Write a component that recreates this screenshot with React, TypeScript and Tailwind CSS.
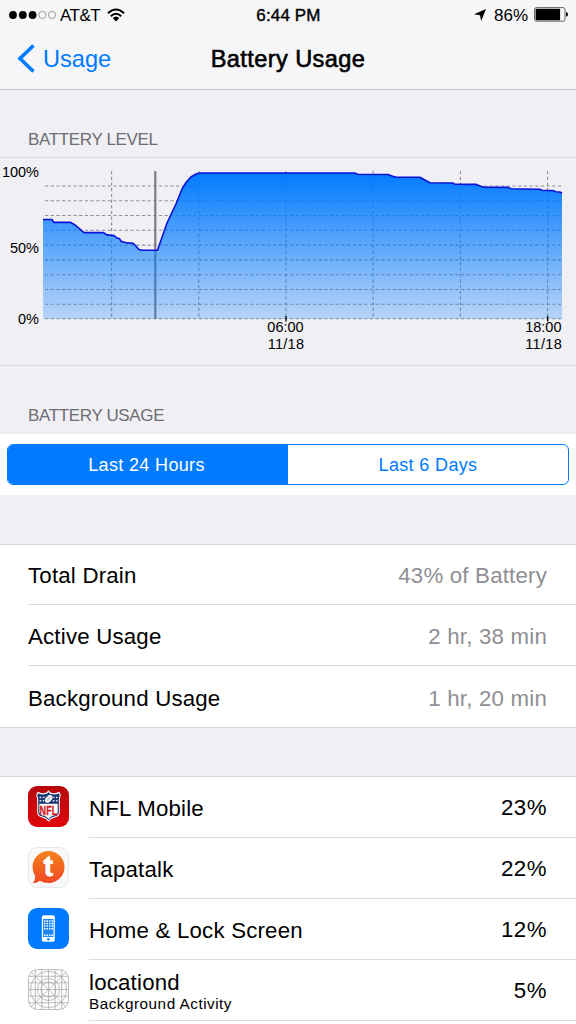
import * as React from 'react';

interface IUsageApp {
  name: string;
  percent: string;
  detail?: string;
  icon: React.ReactNode;
}

const LEVEL_LINE =
  '43,219.5 52,219.5 54,222.4 70.5,222.4 75,225 84,232.6 103.5,232.6 107,234.9 114,235.6 117,238 119.5,238.7 121,241.2 127,242.9 133,243.3 135,245 139,249.5 142,250.2 157.5,250.2 167,223 176,204 182,189 186,182.5 191,177 196,174 200,173 355,173 357.5,174.3 388,174.5 392,176 396,177.2 420,177.2 424,179.5 430,182.7 453,183 455,184.3 476,184.4 480,186 484,187.2 508,187.4 511,188.8 540,189.2 542,190.3 553,190.6 556,191.8 560,192 562,193';

const GRID_ROWS = [186, 200.7, 215.5, 230.3, 245.1, 259.9, 274.7, 289.5, 304.3, 318.8];
const GRID_COLUMNS = [111.6, 198.8, 286, 373.2, 460.4, 547.6];

const NflIcon = () => (
  <svg width="41" height="41" viewBox="0 0 41 41">
    <defs>
      <linearGradient id="nfl" x1="0" y1="0" x2="0" y2="1">
        <stop offset="0" stopColor="#b5080c" />
        <stop offset="1" stopColor="#e0070b" />
      </linearGradient>
    </defs>
    <rect width="41" height="41" rx="9" fill="url(#nfl)" />
    <path
      d="M20.5 4.3L22.5 6.6Q27 8 31.5 5.8L32.8 9.5Q31.5 12 31.8 15V26Q31.8 30.5 27 31.6Q22.5 32.6 20.5 35.8Q18.5 32.6 14 31.6Q9.2 30.5 9.2 26V15Q9.5 12 8.2 9.5L9.5 5.8Q14 8 18.5 6.6Z"
      fill="#fff"
    />
    <path
      d="M20.5 5.9L22 7.8Q27 9.2 31 7.2L31.7 9.5Q30.5 12 30.8 15V26Q30.8 29.8 26.5 30.6Q22.5 31.5 20.5 34.2Q18.5 31.5 14.5 30.6Q10.2 29.8 10.2 26V15Q10.5 12 9.3 9.5L10 7.2Q14 9.2 19 7.8Z"
      fill="#17366f"
    />
    <path d="M11.3 17.8H29.7V26Q29.7 28.8 26 29.6Q22 30.5 20.5 32.9Q19 30.5 15 29.6Q11.3 28.8 11.3 26Z" fill="#fff" />
    <path d="M11.5 11.5H29.5M11.5 14.8H29.5" stroke="#d5deeb" strokeWidth="1.6" strokeDasharray="1.9 1.4" />
    <ellipse cx="20.7" cy="12.9" rx="5.4" ry="3.9" transform="rotate(-48 20.7 12.9)" fill="#17366f" />
    <ellipse cx="20.7" cy="12.9" rx="4.6" ry="2.9" transform="rotate(-48 20.7 12.9)" fill="#f3f5f8" />
    <path d="M19.3 14.5L22.3 11" stroke="#8794a8" strokeWidth="0.8" />
    <text x="20.5" y="28.8" textAnchor="middle" textLength="18" lengthAdjust="spacingAndGlyphs" fontSize="13.5" fontWeight="700" fill="#d9141b" stroke="#d9141b" strokeWidth="0.3">
      NFL
    </text>
  </svg>
);

const TapatalkIcon = () => (
  <svg width="41" height="41" viewBox="0 0 41 41">
    <defs>
      <linearGradient id="tapatalk" x1="0" y1="0" x2="0" y2="1">
        <stop offset="0" stopColor="#f5821f" />
        <stop offset="1" stopColor="#ee4823" />
      </linearGradient>
    </defs>
    <rect x="0.5" y="0.5" width="40" height="40" rx="9" fill="#f9f9f9" stroke="#e8e8e8" />
    <path
      d="M20.5 4A16 16 0 1 1 20.5 36Q15.5 36 11.8 33.7Q9.3 35.8 4.8 36.2Q7.4 33.5 7.2 29Q4.5 25 4.5 20A16 16 0 0 1 20.5 4Z"
      fill="url(#tapatalk)"
    />
    <text x="20.5" y="29.3" textAnchor="middle" fontSize="28" fontWeight="700" fill="#fff" stroke="#fff" strokeWidth="0.8">
      t
    </text>
    <polygon points="21.5,8.3 21.5,14.5 14.5,14.5" fill="#fff" />
  </svg>
);

const HomeScreenIcon = () => (
  <svg width="41" height="41" viewBox="0 0 41 41">
    <rect width="41" height="41" rx="9" fill="#007aff" />
    <rect x="13.8" y="7.3" width="13" height="26.4" rx="2" fill="#fff" />
    <rect x="15.1" y="11" width="10.4" height="18" fill="#1b86fb" />
    <g stroke="#fff" strokeWidth="1.5" strokeDasharray="1.5 1">
      <path d="M16 12.9H25M16 15.5H25M16 18.1H25M16 20.7H25M16 27.2H25" />
    </g>
    <circle cx="20.3" cy="31.3" r="1.2" fill="#007aff" />
  </svg>
);

const PlaceholderIcon = () => (
  <svg width="41" height="41" viewBox="0 0 41 41" fill="none" stroke="#a3a3a3" strokeWidth="0.7">
    <rect x="0.5" y="0.5" width="40" height="40" rx="9" fill="#fdfdfd" />
    <path d="M7.3 1V40M13.8 1V40M20.5 1V40M27.2 1V40M33.7 1V40" />
    <path d="M1 7.3H40M1 13.8H40M1 20.5H40M1 27.2H40M1 33.7H40" />
    <path d="M3 3L38 38M38 3L3 38" />
    <circle cx="20.5" cy="20.5" r="18" />
    <circle cx="20.5" cy="20.5" r="11" />
    <circle cx="20.5" cy="20.5" r="7.5" />
  </svg>
);

const apps: IUsageApp[] = [
  { name: 'NFL Mobile', percent: '23%', icon: <NflIcon /> },
  { name: 'Tapatalk', percent: '22%', icon: <TapatalkIcon /> },
  { name: 'Home & Lock Screen', percent: '12%', icon: <HomeScreenIcon /> },
  { name: 'locationd', percent: '5%', detail: 'Background Activity', icon: <PlaceholderIcon /> },
];

const totals = [
  { label: 'Total Drain', value: '43% of Battery' },
  { label: 'Active Usage', value: '2 hr, 38 min' },
  { label: 'Background Usage', value: '1 hr, 20 min' },
];

const StatusBar = () => (
  <div className="flex h-[29px] items-center justify-between pr-[8px] pl-[9px] text-[17px] leading-none">
    <div className="flex w-1/3 items-center">
      <svg width="48" height="10" viewBox="0 0 48 10">
        {[4, 13.8, 23.6].map((x) => (
          <circle key={x} cx={x} cy="5" r="3.9" />
        ))}
        {[33.4, 43.1].map((x) => (
          <circle key={x} cx={x} cy="5" r="3.6" fill="none" stroke="#777" strokeWidth="0.7" />
        ))}
      </svg>
      <span className="ml-[3px] pt-px tracking-[-0.5px]">AT&amp;T</span>
      <svg className="ml-[7px]" width="18" height="14" viewBox="0 0 18 14">
        <g fill="none" stroke="#000" strokeWidth="2">
          <path d="M1 5.2Q9 -2.2 17 5.2" />
          <path d="M3.8 8.2Q9 3.4 14.2 8.2" />
        </g>
        <path d="M5.7 10Q9 7 12.3 10L9 13.4Z" />
      </svg>
    </div>
    <span className="pt-px tracking-[0.15px] [-webkit-text-stroke:0.4px_#000]">6:44 PM</span>
    <div className="flex w-1/3 items-center justify-end">
      <svg width="12" height="12" viewBox="0 0 12 12">
        <path d="M12 0L7.2 12L6 6.3L0 5.2Z" />
      </svg>
      <span className="ml-[8px] pt-px">86%</span>
      <svg className="ml-[6px]" width="34" height="15" viewBox="0 0 34 15">
        <rect x="0.5" y="0.6" width="30.5" height="13.6" rx="2" fill="none" stroke="#555" strokeWidth="0.9" />
        <rect x="1.6" y="1.7" width="24.5" height="11.5" rx="0.8" />
        <path d="M32 5Q34 5.5 34 7.4Q34 9.3 32 9.8Z" />
      </svg>
    </div>
  </div>
);

const BatteryChart = () => (
  <svg className="block" width="576" height="207" viewBox="0 158 576 207">
    <defs>
      <linearGradient id="level" x1="0" y1="173" x2="0" y2="319" gradientUnits="userSpaceOnUse">
        <stop offset="0" stopColor="#007aff" stopOpacity="0.99" />
        <stop offset="1" stopColor="#007aff" stopOpacity="0.23" />
      </linearGradient>
    </defs>
    <g stroke="#8e8e94" strokeWidth="1.1" strokeDasharray="3.2 2.5">
      {GRID_ROWS.map((y) => (
        <path key={y} d={`M45 ${y}H561`} />
      ))}
      {GRID_COLUMNS.map((x) => (
        <path key={x} d={`M${x} 171V319`} />
      ))}
    </g>
    <path d="M155.3 171V319" stroke="#7f7f83" strokeWidth="2.2" />
    <polygon points={`43,319 ${LEVEL_LINE} 562,319`} fill="url(#level)" />
    <polyline points={LEVEL_LINE} fill="none" stroke="#0a12d6" strokeWidth="1.6" />
    <path d="M286 316V321.5M547.6 316V321.5" stroke="#111" strokeWidth="1.4" />
    <g fontSize="14.5" fill="#000">
      <text x="39" y="176.8" textAnchor="end">100%</text>
      <text x="39" y="253" textAnchor="end">50%</text>
      <text x="39" y="324" textAnchor="end">0%</text>
      <text x="285.5" y="332.2" textAnchor="middle">06:00</text>
      <text x="286" y="349" textAnchor="middle" letterSpacing="0.3">11/18</text>
      <text x="561.5" y="332.2" textAnchor="end">18:00</text>
      <text x="562" y="349" textAnchor="end" letterSpacing="0.3">11/18</text>
    </g>
  </svg>
);

const App: React.FC = () => {
  const [range, setRange] = React.useState<'day' | 'week'>('day');

  return (
    <div className="h-[1024px] w-[576px] overflow-hidden bg-[#efeff4] font-['Liberation_Sans',Arial,sans-serif] text-black">
      <header className="h-[90px] border-b border-[#c4c4c8] bg-[#f6f6f8]">
        <StatusBar />
        <div className="flex h-[60px] items-center justify-between px-[17px]">
          <button className="flex w-1/4 items-center text-[23.6px] text-[#007aff]">
            <svg width="18" height="29" viewBox="0 0 18 29">
              <path d="M16.5 1.5L3 14.5L16.5 27.5" fill="none" stroke="#007aff" strokeWidth="3.6" />
            </svg>
            <span className="ml-[8px] pt-[2px]">Usage</span>
          </button>
          <h1 className="pt-[2px] text-[23.6px] tracking-[0.4px] whitespace-nowrap [-webkit-text-stroke:0.6px_#000]">
            Battery Usage
          </h1>
          <div className="w-1/4" />
        </div>
      </header>

      <h2 className="flex h-[67px] items-end pb-[5px] pl-[28px] text-[17px] tracking-[-0.35px] text-[#6d6d72]">
        BATTERY LEVEL
      </h2>
      <section className="h-[209px] border-y border-[#d9d9de]">
        <BatteryChart />
      </section>

      <h2 className="flex h-[68px] items-end pb-[6px] pl-[28px] text-[17px] tracking-[-0.35px] text-[#6d6d72]">
        BATTERY USAGE
      </h2>
      <div className="h-[61px] bg-white px-[7px] py-[10px]">
        <div className="flex h-[41px] overflow-hidden rounded-[6px] border-[1.5px] border-[#007aff] text-[18px] tracking-[0.35px]">
          <button
            onClick={() => setRange('day')}
            className={range === 'day' ? 'w-1/2 bg-[#007aff] pt-px pr-[3px] text-white' : 'w-1/2 pt-px pr-[3px] text-[#007aff]'}
          >
            Last 24 Hours
          </button>
          <button
            onClick={() => setRange('week')}
            className={range === 'week' ? 'w-1/2 bg-[#007aff] pt-px text-white' : 'w-1/2 pt-px text-[#007aff]'}
          >
            Last 6 Days
          </button>
        </div>
      </div>

      <section className="mt-[49px] border-y border-[#d9d9dd] bg-white pl-[28px] text-[22.25px] tracking-[0.2px]">
        {totals.map((item) => (
          <div
            key={item.label}
            className="flex h-[61px] items-center justify-between border-b border-[#dcdcde] pt-[4px] pr-[29px] first:h-[60px] first:pt-[3px] last:border-b-0"
          >
            <span>{item.label}</span>
            <span className="text-[#8e8e93]">{item.value}</span>
          </div>
        ))}
      </section>

      <section className="mt-[48px] border-t border-[#d9d9dd] bg-white pl-[28px] text-[22.25px] tracking-[0.2px]">
        {apps.map((app) => (
          <div key={app.name} className="flex h-[61px] items-center">
            <div className="mb-[2px] w-[61px]">{app.icon}</div>
            <div className="flex h-full flex-1 items-center justify-between border-b border-[#dcdcde] pr-[29px]">
              <div className="flex flex-col pt-[4px]">
                <span className={app.detail ? 'mt-[2px] leading-[22px]' : ''}>{app.name}</span>
                {app.detail ? (
                  <span className="text-[15.3px] leading-[20px] tracking-[0.5px]">{app.detail}</span>
                ) : null}
              </div>
              <span className="pt-px tracking-[0.5px]">{app.percent}</span>
            </div>
          </div>
        ))}
        <div className="h-[4px]" />
      </section>
    </div>
  );
};

export default App;
